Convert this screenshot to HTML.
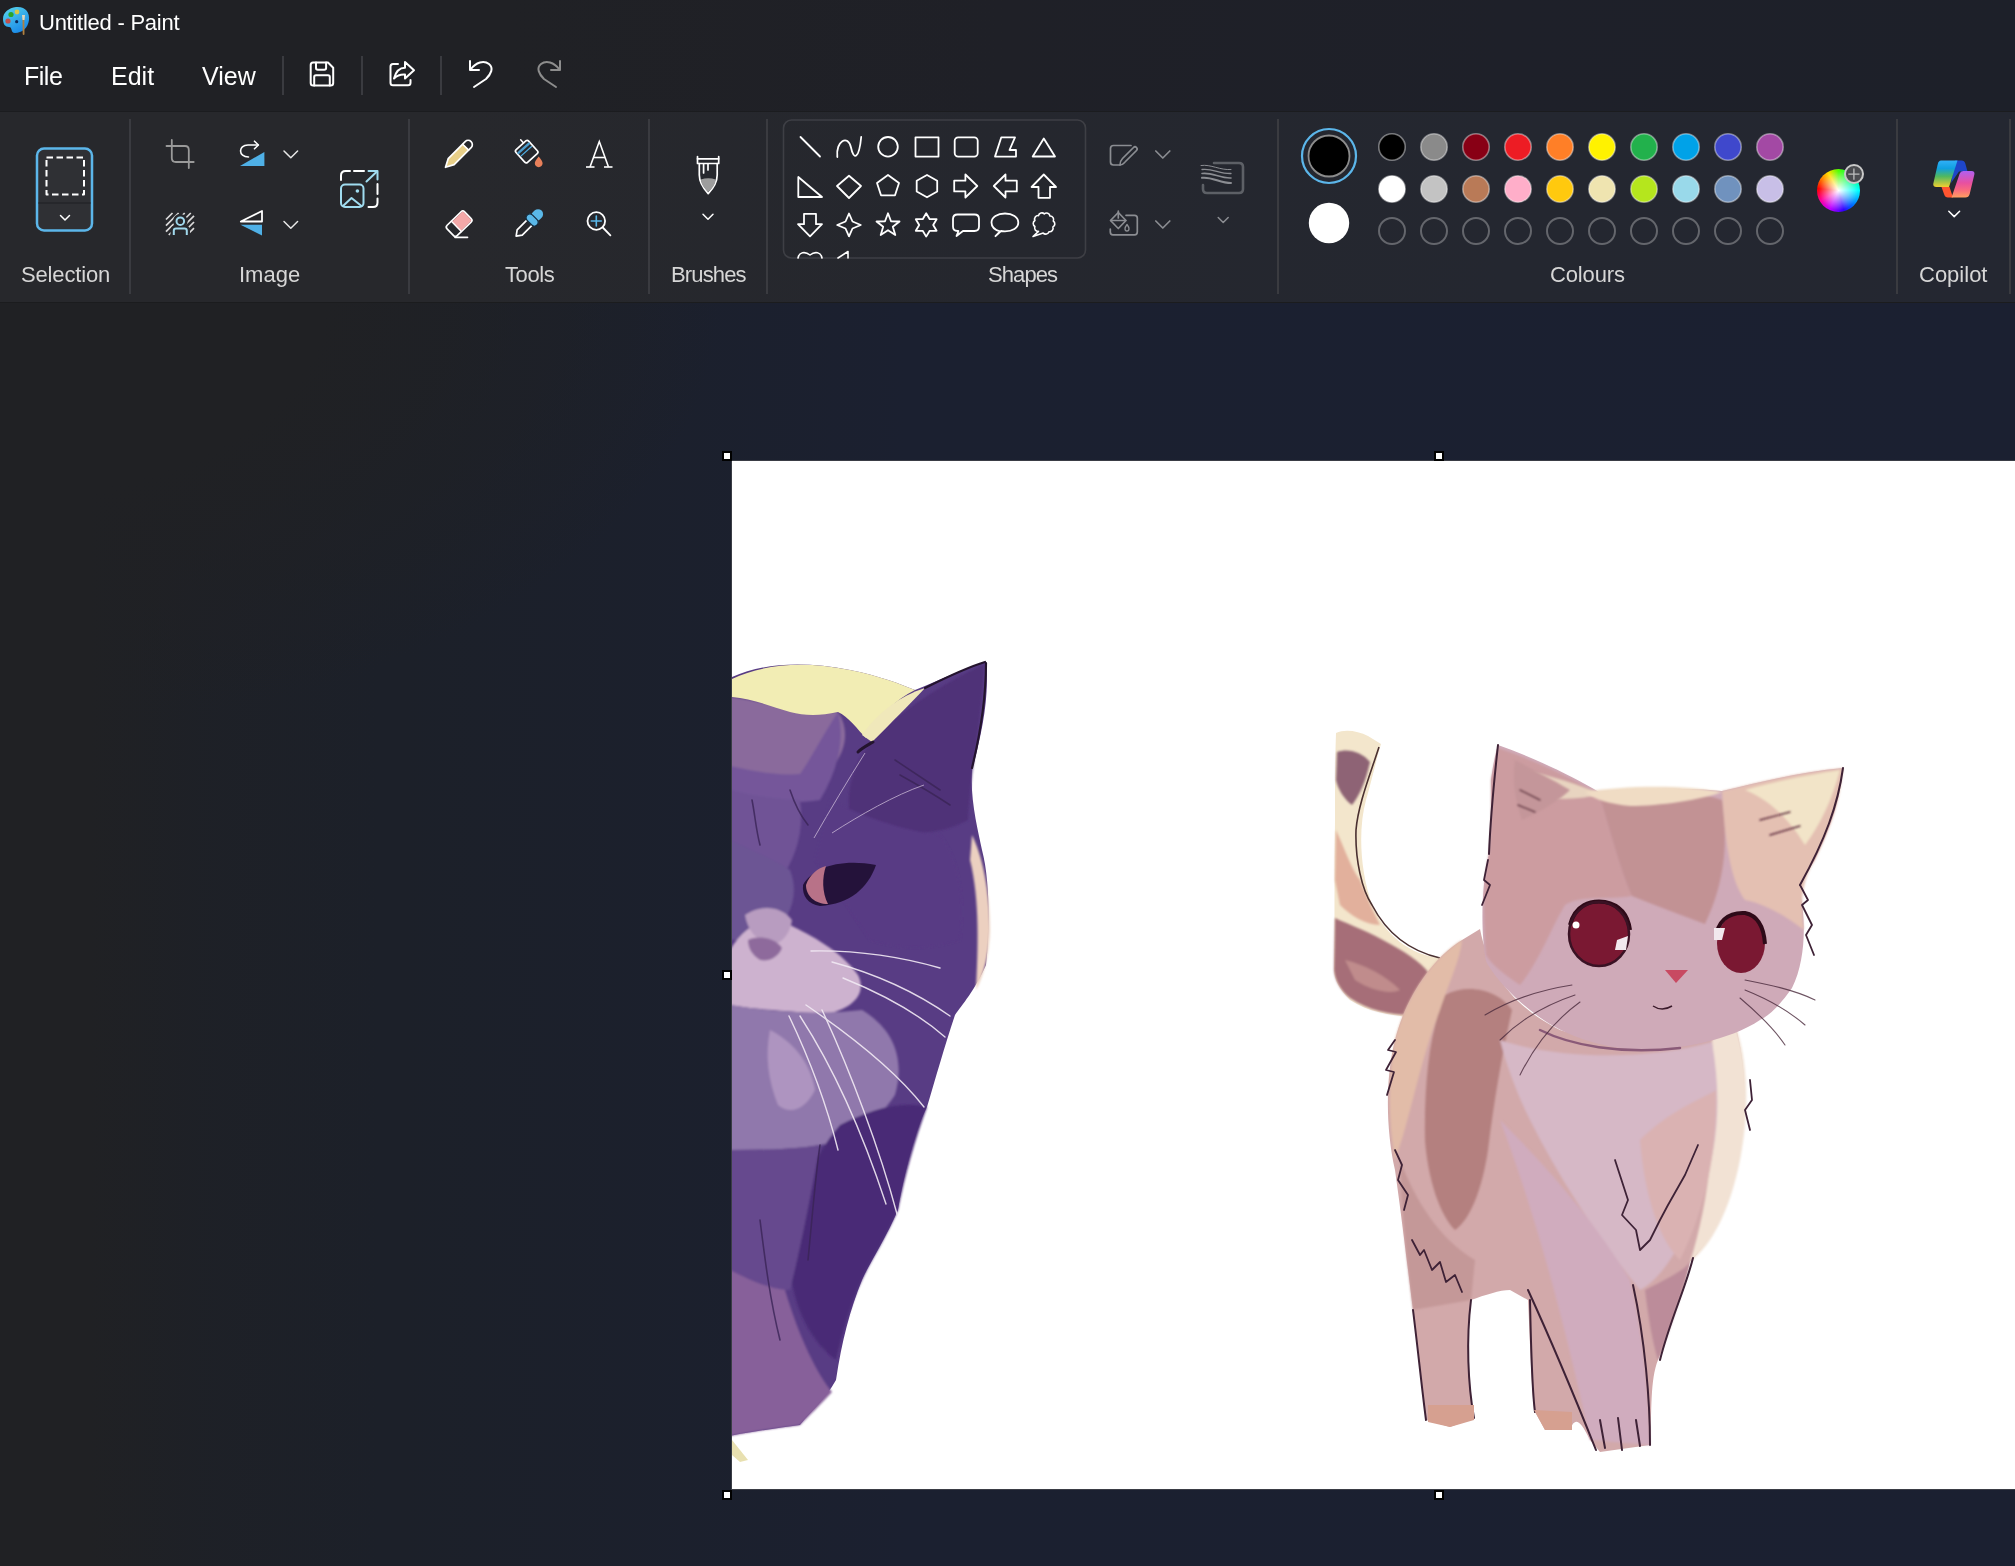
<!DOCTYPE html>
<html><head><meta charset="utf-8">
<style>
*{margin:0;padding:0;box-sizing:border-box}
html,body{width:2015px;height:1566px;overflow:hidden;font-family:"Liberation Sans",sans-serif}
body{position:relative;background:#202124}
.abs{position:absolute}
#top{left:0;top:0;width:2015px;height:111px;background:linear-gradient(90deg,#202125 0%,#202125 25%,#1f2027 50%,#1e2029 75%,#1d2029 100%)}
#ribbon{left:0;top:112px;width:2015px;height:190px;background:linear-gradient(90deg,#27282c 0%,#27282c 22%,#25272e 50%,#242730 75%,#242731 100%)}
#work{left:0;top:303px;width:2015px;height:1263px;background:radial-gradient(ellipse 720px 430px at 0 0,rgba(32,33,36,1) 0%,rgba(32,33,36,1) 45%,rgba(32,33,36,0) 100%),linear-gradient(90deg,rgba(32,33,36,1) 0px,rgba(32,33,36,1) 90px,rgba(32,33,36,0.45) 200px,rgba(32,33,36,0) 380px),linear-gradient(90deg,#1c2029 0%,#1c2029 20%,#1b2030 45%,#1b2031 100%)}
.t{position:absolute;white-space:nowrap;color:#fff;will-change:transform}
.lbl{position:absolute;top:262.3px;font-size:22px;color:#d6d6d6;white-space:nowrap;will-change:transform}
.sep{position:absolute;width:2px;background:#3a3b40}
.tsep{position:absolute;width:2px;top:56px;height:39px;background:#3a3b40}
#canvas{left:732px;top:461px;width:1414px;height:1028px;background:#fff;overflow:hidden;box-shadow:0 0 0 1px #3a3d45}
.h{position:absolute;width:10px;height:10px;background:#fff;border:2px solid #000}
svg{position:absolute;left:0;top:0}
</style></head><body>
<div id="top" class="abs"></div>
<div id="ribbon" class="abs"></div>
<div class="abs" style="left:0;top:111px;width:2015px;height:1px;background:#1b1c1f"></div>
<div class="abs" style="left:0;top:302px;width:2015px;height:1px;background:#1b1c1e"></div>
<div id="work" class="abs"></div>

<div class="t" style="left:39px;top:10px;font-size:22px;letter-spacing:-0.25px">Untitled - Paint</div>
<div class="t" style="left:24px;top:62px;font-size:25px;letter-spacing:-0.5px">File</div>
<div class="t" style="left:111px;top:62px;font-size:25px">Edit</div>
<div class="t" style="left:202px;top:62px;font-size:25px">View</div>
<div class="tsep" style="left:282px"></div>
<div class="tsep" style="left:361px"></div>
<div class="tsep" style="left:440px"></div>

<div class="sep" style="left:129px;top:119px;height:175px"></div>
<div class="sep" style="left:408px;top:119px;height:175px"></div>
<div class="sep" style="left:648px;top:119px;height:175px"></div>
<div class="sep" style="left:766px;top:119px;height:175px"></div>
<div class="sep" style="left:1277px;top:119px;height:175px"></div>
<div class="sep" style="left:1896px;top:119px;height:175px"></div>
<div class="sep" style="left:2009px;top:119px;height:175px"></div>

<div class="lbl" style="left:21px;letter-spacing:-0.15px">Selection</div>
<div class="lbl" style="left:239px">Image</div>
<div class="lbl" style="left:505px;letter-spacing:-0.4px">Tools</div>
<div class="lbl" style="left:671px;letter-spacing:-0.85px">Brushes</div>
<div class="lbl" style="left:988px;letter-spacing:-0.9px">Shapes</div>
<div class="lbl" style="left:1550px;letter-spacing:-0.15px">Colours</div>
<div class="lbl" style="left:1919px">Copilot</div>

<!-- ICONS -->
<svg width="2015" height="310" viewBox="0 0 2015 310" fill="none" stroke-linecap="round" stroke-linejoin="round">
<!-- app icon -->
<g>
<defs><linearGradient id="appg" x1="0" y1="0" x2="0.6" y2="1"><stop offset="0" stop-color="#5ad8ee"/><stop offset="0.5" stop-color="#3ab0ea"/><stop offset="1" stop-color="#1a8ae8"/></linearGradient></defs>
<path d="M16,7 C25,6 30,12 29,20 C28,28 22,33 15,33 C10,33 13,27 9,27 C5,27 3,24 3,19 C3,12 9,8 16,7Z" fill="url(#appg)"/>
<circle cx="8" cy="21" r="2.6" fill="#c0504d"/>
<circle cx="11" cy="14.5" r="2.6" fill="#2aa52a"/>
<circle cx="17" cy="12" r="2.4" fill="#d8c84a"/>
<circle cx="16.7" cy="21.7" r="1.6" fill="#0a2a5a"/>
<path d="M23.4,18 L23.6,34" stroke="#b08040" stroke-width="1.8"/>
<path d="M22,15 L25,15 L24.5,20 L22.5,20Z" fill="#e0d8c0"/>
</g>
<!-- save -->
<g stroke="#fff" stroke-width="2">
<path d="M313,62.5 H328 L333.2,67.7 V83 Q333.2,85.5 330.7,85.5 H313.2 Q310.7,85.5 310.7,83 V65 Q310.7,62.5 313,62.5Z"/>
<path d="M316,62.5 V68 Q316,69.8 317.8,69.8 H324.3 Q326.1,69.8 326.1,68 V62.5"/>
<path d="M314.2,85.5 V77 Q314.2,75.2 316,75.2 H328 Q329.8,75.2 329.8,77 V85.5"/>
</g>
<!-- share -->
<g stroke="#fff" stroke-width="2">
<path d="M398,64 H393 Q390.5,64 390.5,66.5 V82.8 Q390.5,85.3 393,85.3 H408 Q410.5,85.3 410.5,82.8 V80"/>
<path d="M394,78.5 C396,71 400,67.8 405,67.8 V62 L414,70.3 L405,78.5 V74.5 C400.5,74.2 397,75.5 394,78.5Z"/>
</g>
<!-- undo -->
<g stroke="#fff" stroke-width="2">
<path d="M470,61 V70 H479"/>
<path d="M470.5,69.5 C476,62 484,60 489,64 C494,68 491,74 486,79 L474,87"/>
</g>
<!-- redo -->
<g stroke="#8d8d8d" stroke-width="2">
<path d="M560,61 V70 H551"/>
<path d="M559.5,69.5 C554,62 546,60 541,64 C536,68 539,74 544,79 L556,87"/>
</g>

<!-- selection button -->
<rect x="37" y="148.5" width="55" height="82" rx="7" fill="#2f3034" stroke="#5cb6ea" stroke-width="2.5"/>
<line x1="39" y1="203" x2="90" y2="203" stroke="#242529" stroke-width="1.5"/>
<rect x="46.5" y="157.5" width="37.5" height="37" stroke="#fff" stroke-width="2" stroke-dasharray="6.5 3.5" stroke-linecap="butt"/>
<path d="M60.5,215.5 L65,220 L69.5,215.5" stroke="#fff" stroke-width="1.5"/>

<!-- crop -->
<g stroke="#9a9a9a" stroke-width="1.8">
<path d="M166.5,146 H185 Q188.8,146 188.8,150 V168"/>
<path d="M171.8,140 V158 Q171.8,162 175.8,162 H193.7"/>
</g>
<!-- rotate -->
<path d="M240,166 L264.4,152 V166Z" fill="#4fb0e6"/>
<g stroke="#fff" stroke-width="1.6">
<path d="M248.5,157 C238,157 238,145 248,145 H258"/>
<path d="M254.5,141.2 L258.4,145 L254.5,148.8"/>
</g>
<path d="M284,151 L290.8,157.8 L297.6,151" stroke="#e8e8e8" stroke-width="1.5"/>
<!-- remove bg -->
<defs><mask id="rbm" maskUnits="userSpaceOnUse" x="160" y="200" width="40" height="40">
<rect x="160" y="200" width="40" height="40" fill="#fff"/>
<circle cx="180.3" cy="221.2" r="7.3" fill="#000"/>
<path d="M170.5,238 V230.5 Q170.5,225.5 175.5,225.5 H185 Q190,225.5 190,230.5 V238Z" fill="#000"/>
</mask></defs>
<g stroke="#dcdcdc" stroke-width="1.7" stroke-linecap="butt" mask="url(#rbm)">
<path d="M166.0,219.5 L172.5,213.0"/>
<path d="M166.0,225.6 L178.6,213.0"/>
<path d="M166.0,231.7 L184.7,213.0"/>
<path d="M168.8,235.0 L190.8,213.0"/>
<path d="M174.9,235.0 L194.0,215.9"/>
<path d="M181.0,235.0 L194.0,222.0"/>
<path d="M187.1,235.0 L194.0,228.1"/>
</g>
<g stroke="#a0d8ec" stroke-width="2">
<circle cx="180.3" cy="221.2" r="3.8"/>
<path d="M173.8,235 V230.8 Q173.8,228.6 176,228.6 H184.6 Q186.8,228.6 186.8,230.8 V235" stroke-linecap="butt"/>
</g>
<!-- flip -->
<path d="M240.8,221.5 L262,211 V221.5Z" stroke="#fff" stroke-width="1.8"/>
<path d="M240.5,224.8 H262 V235.5Z" fill="#4fb0e6"/>
<path d="M284,221.5 L290.8,228.3 L297.6,221.5" stroke="#e8e8e8" stroke-width="1.5"/>
<!-- resize -->
<g stroke="#fff" stroke-width="2">
<path d="M341,180 V175.5 Q341,171 345.5,171 H350"/>
<path d="M354,171 H364"/>
<path d="M377.5,184 V194"/>
<path d="M377.5,198.5 V202.5 Q377.5,207 373,207 H368.5"/>
</g>
<g stroke="#a0dcf0" stroke-width="2">
<path d="M368.5,171 H377.5 V179.5"/>
<path d="M366.5,181.5 L377,171.5"/>
<rect x="341" y="184.5" width="22.5" height="22.5" rx="4"/>
<path d="M343,206 L351.5,198 L361.5,206"/>
</g>
<circle cx="357.4" cy="191" r="1.8" fill="#a0dcf0"/>

<!-- pencil -->
<g transform="translate(445.5,167.3) rotate(-45)">
<path d="M0,0 L8,-4.2 H29 V4.2 H8Z" fill="#e8cf88"/>
<path d="M0,0 L8,-4.2 H32 A4.2,4.2 0 0 1 32,4.2 H8Z" stroke="#fff" stroke-width="1.7"/>
<path d="M28.5,-4.2 V4.2" stroke="#fff" stroke-width="1.5"/>
</g>
<!-- fill bucket -->
<g transform="translate(526.7,151.6) rotate(-42)">
<rect x="-8.5" y="-8.5" width="17" height="17" rx="2" stroke="#fff" stroke-width="1.7"/>
<path d="M-7,-4.5 H7" stroke="#4a9ccc" stroke-width="2.4"/>
<path d="M-7,-0.5 H7" stroke="#4fb0e6" stroke-width="1.2"/>
<path d="M3.4,-8.5 V-12.8" stroke="#fff" stroke-width="1.5"/>
</g>
<path d="M538.7,156.5 C536,160 534.8,161.5 534.8,163.3 C534.8,165.5 536.5,167.2 538.7,167.2 C540.9,167.2 542.6,165.5 542.6,163.3 C542.6,161.5 541.4,160 538.7,156.5Z" fill="#e8805a"/>
<!-- text A -->
<g stroke="#fff" stroke-width="1.6" stroke-linecap="butt" stroke-linejoin="miter">
<path d="M590,167 L599.3,141.5 L608.5,167"/>
<path d="M593.5,157.5 H605"/>
<path d="M586,167 H594.5"/><path d="M604,167 H612.5"/>
</g>
<!-- eraser -->
<g transform="translate(459.1,223.7) rotate(-44)">
<rect x="-12.2" y="-7.2" width="24.4" height="14.4" rx="2.5" stroke="#fff" stroke-width="1.7"/>
<path d="M-3.8,-6.4 H10.2 Q11.4,-6.4 11.4,-5.2 V5.2 Q11.4,6.4 10.2,6.4 H-3.8Z" fill="#f4a8a8"/>
<path d="M-3.8,-7.2 V7.2" stroke="#fff" stroke-width="1.4"/>
</g>
<path d="M455,237.3 H467.5" stroke="#fff" stroke-width="1.7"/>
<!-- color picker -->
<g transform="translate(515.8,236.4) rotate(-45)">
<path d="M0.5,0 L5.5,-3.6 H20 V3.6 H5.5Z" stroke="#fff" stroke-width="1.7"/>
<rect x="24" y="-5" width="12.5" height="10" rx="5" fill="#5ab8e8"/>
<rect x="19.3" y="-7" width="7.6" height="14" rx="3.8" fill="#5ab8e8" stroke="#14283a" stroke-width="1.2"/>
</g>
<!-- magnifier -->
<g stroke="#fff" stroke-width="1.8">
<circle cx="596.3" cy="221" r="8.8"/>
<path d="M602.8,227.5 L610.4,235.3"/>
</g>
<path d="M596.3,216 V226 M591.3,221 H601.3" stroke="#5bb8ea" stroke-width="1.6"/>

<!-- brush -->
<g stroke="#fff" stroke-width="1.7">
<path d="M697.5,156.5 V163.5 H718.7 V156.5"/>
<path d="M697.5,158.8 H718.7"/>
<path d="M699.3,163.5 V175 C699.3,182 703,188 708.2,193.6 C713.5,188 717.2,182 717.2,175 V163.5"/>
<path d="M703.6,164 V173 M708,164 V170"/>
</g>
<path d="M700.8,179.5 Q708.2,176.8 715.8,179.5 C715.4,184 712.8,188 708.2,192 C703.8,188 701.1,184 700.8,179.5Z" fill="#9d9d9d"/>
<path d="M703,214.3 L708,219.3 L713,214.3" stroke="#fff" stroke-width="1.5"/>

<!-- shapes box -->
<rect x="783.5" y="120" width="302" height="138" rx="8" stroke="#3e3f45" stroke-width="1.6"/>
<g stroke="#fff" stroke-width="1.8">
<path d="M800.5,137 L820,156.5"/>
<path d="M837.3,157 C835.5,141 848,134 851,147.5 C853.5,160 859,160 861.2,137"/>
<circle cx="888" cy="146.8" r="9.8"/>
<rect x="915.5" y="137.3" width="23" height="19.3"/>
<rect x="954.7" y="137.3" width="23" height="19.3" rx="3.5"/>
<path d="M1001.3,137.3 H1015 L1009.5,150 H1016 V156.6 H995Z"/>
<path d="M1043.8,138.5 L1055,156.5 H1032.7Z"/>
<path d="M798.3,177 V197 H822Z"/>
<path d="M849,175.8 L861,186 L849,198 L837,186Z"/>
<path d="M888,175 L899,183 L895,195.3 H881 L877,183Z"/>
<path d="M927,175 L937.2,180.7 V191.5 L927,197.3 L916.7,191.5 V180.7Z"/>
<path d="M954.2,180.7 H965.4 V174.5 L977.3,186 L965.4,197.5 V191.4 H954.2Z"/>
<path d="M1016.8,180.7 H1005.5 V174.5 L993.8,186 L1005.5,197.5 V191.4 H1016.8Z"/>
<path d="M1043.8,174.5 L1056,187 H1050 V197.8 H1038.5 V187 H1031.6Z"/>
<path d="M804,213.8 H816 V224.2 H822 L810,236.3 L798,224.2 H804Z"/>
<path d="M849,213.5 L852.5,221.5 L860.8,225 L852.5,228.5 L849,236.3 L845.5,228.5 L837.2,225 L845.5,221.5Z"/>
<path d="M888,213.3 L891,221.3 L899.5,221.5 L892.8,226.8 L895.3,235 L888,230.2 L880.7,235 L883.2,226.8 L876.5,221.5 L885,221.3Z"/>
<path d="M926.2,213.3 L929.7,219.2 L936.6,219.2 L933.2,225 L936.6,230.8 L929.7,230.8 L926.2,236.6 L922.7,230.8 L915.8,230.8 L919.2,225 L915.8,219.2 L922.7,219.2Z"/>
<path d="M957.5,214.5 H974.5 Q979,214.5 979,219 V226.5 Q979,231 974.5,231 H963 L956.5,236 L958.5,231 H957.5 Q953,231 953,226.5 V219 Q953,214.5 957.5,214.5Z"/>
<path d="M1000,231.3 C993,229.5 991.5,225.5 991.5,222.5 C991.5,217 997.5,213.5 1005,213.5 C1012.5,213.5 1018.3,217 1018.3,222.5 C1018.3,228 1012.5,231.3 1005,231.3 C1003.5,231.3 1002,231.2 1001,231 L995.5,236.2Z"/>
<path d="M1038.5,231.4 A3.5,3.5 0 0 1 1034.9,226.5 A3.5,3.5 0 0 1 1034.9,220.5 A3.5,3.5 0 0 1 1038.5,215.6 A3.5,3.5 0 0 1 1044.3,213.9 A3.5,3.5 0 0 1 1050.0,216.0 A3.5,3.5 0 0 1 1053.3,221.0 A3.5,3.5 0 0 1 1052.9,227.0 A3.5,3.5 0 0 1 1049.0,231.7 A3.5,3.5 0 0 1 1043.2,233.1 L1033,236.5 Z" stroke-width="1.6"/>
<path d="M798,258 C799,252 805,251 810,255 C815,251 821,252 822,258" stroke-width="1.6"/>
<path d="M838,258 L848,251.5 V258" stroke-width="1.6"/>
</g>
<!-- outline / fill -->
<g stroke="#8b8d92" stroke-width="1.7">
<path d="M1131,145.5 H1113.5 Q1110.5,145.5 1110.5,148.5 V162 Q1110.5,165 1113.5,165 H1120"/>
<path d="M1120,165 C1120,161 1121,160 1122.5,158.5 L1133.5,147.5 Q1135,146 1136.5,147.5 Q1138,149 1136.5,150.5 L1125.5,161.5 C1124,163 1123,165 1120,165Z"/>
<path d="M1155.8,151 L1162.8,158 L1169.8,151"/>
<path d="M1126,215.3 H1134.5 Q1137.3,215.3 1137.3,218 V232 Q1137.3,234.8 1134.5,234.8 H1113 Q1110.3,234.8 1110.3,232 V229"/>
<path d="M1118.3,212.5 L1126,220.5 L1118.3,228.5 L1110.5,220.5Z"/>
<path d="M1110.8,220.5 H1125.5"/>
<path d="M1118.3,211 V218"/>
<path d="M1127,224.5 C1125.5,226.5 1125,227.5 1125,228.7 C1125,230 1126,231 1127,231 C1128,231 1129,230 1129,228.7 C1129,227.5 1128.5,226.5 1127,224.5Z" stroke-width="1.3"/>
<path d="M1155.8,221 L1162.8,228 L1169.8,221"/>
</g>
<g>
<path d="M1214,163 H1239 Q1243,163 1243,167 V189 Q1243,193 1239,193 H1207 Q1203,193 1203,189 V185" stroke="#5d6066" stroke-width="2.6"/>
<g stroke="#8b8d92">
<path d="M1201,165.5 C1211,164 1220,170.5 1231,169.5" stroke-width="1"/>
<path d="M1202,169.5 C1212,168 1220,174 1231,173.5" stroke-width="1.3"/>
<path d="M1202,173.5 C1212,172 1220,178.5 1231,178" stroke-width="1.6"/>
<path d="M1202,177.8 C1212,176.5 1220,183 1231,183" stroke-width="2"/>
</g>
<path d="M1218.2,217.5 L1223.2,222.5 L1228.2,217.5" stroke="#8b8d92" stroke-width="1.5"/>
</g>

<!-- colours -->
<circle cx="1329" cy="156" r="27" stroke="#5cb6ea" stroke-width="2.2"/>
<circle cx="1329" cy="156" r="20.5" fill="#000" stroke="#8c8c8c" stroke-width="1.8"/>
<circle cx="1329" cy="223" r="20.2" fill="#fff"/>
<g stroke="rgba(255,255,255,0.42)" stroke-width="1.6">
<circle cx="1392" cy="147" r="13.2" fill="#000000"/>
<circle cx="1434" cy="147" r="13.2" fill="#8a8a8a"/>
<circle cx="1476" cy="147" r="13.2" fill="#880015"/>
<circle cx="1518" cy="147" r="13.2" fill="#ed1c24"/>
<circle cx="1560" cy="147" r="13.2" fill="#ff7f27"/>
<circle cx="1602" cy="147" r="13.2" fill="#fff200"/>
<circle cx="1644" cy="147" r="13.2" fill="#22b14c"/>
<circle cx="1686" cy="147" r="13.2" fill="#00a2e8"/>
<circle cx="1728" cy="147" r="13.2" fill="#3f48cc"/>
<circle cx="1770" cy="147" r="13.2" fill="#a349a4"/>
<circle cx="1392" cy="189" r="13.2" fill="#ffffff"/>
<circle cx="1434" cy="189" r="13.2" fill="#c3c3c3"/>
<circle cx="1476" cy="189" r="13.2" fill="#b97a57"/>
<circle cx="1518" cy="189" r="13.2" fill="#ffaec9"/>
<circle cx="1560" cy="189" r="13.2" fill="#ffc90e"/>
<circle cx="1602" cy="189" r="13.2" fill="#efe4b0"/>
<circle cx="1644" cy="189" r="13.2" fill="#b5e61d"/>
<circle cx="1686" cy="189" r="13.2" fill="#99d9ea"/>
<circle cx="1728" cy="189" r="13.2" fill="#7092be"/>
<circle cx="1770" cy="189" r="13.2" fill="#c8bfe7"/>
</g>
<g stroke="#64666c" stroke-width="2">
<circle cx="1392" cy="231" r="13"/><circle cx="1434" cy="231" r="13"/><circle cx="1476" cy="231" r="13"/>
<circle cx="1518" cy="231" r="13"/><circle cx="1560" cy="231" r="13"/><circle cx="1602" cy="231" r="13"/>
<circle cx="1644" cy="231" r="13"/><circle cx="1686" cy="231" r="13"/><circle cx="1728" cy="231" r="13"/>
<circle cx="1770" cy="231" r="13"/>
</g>
<path d="M1948.8,211.2 L1954.2,216.6 L1959.6,211.2" stroke="#fff" stroke-width="1.5"/>
</svg>

<!-- color wheel -->
<div class="abs" style="left:1816.5px;top:168.7px;width:43px;height:43px;border-radius:50%;background:radial-gradient(circle at 50% 50%,#fff 0%,rgba(255,255,255,0.6) 25%,rgba(255,255,255,0) 65%),conic-gradient(#50ff00 0deg,#00ff80 50deg,#00ffff 90deg,#0060ff 140deg,#3000ff 165deg,#c000ff 205deg,#ff00a0 240deg,#ff0000 275deg,#ff8000 305deg,#ffe000 330deg,#50ff00 360deg)"></div>
<div class="abs" style="left:1843.8px;top:164px;width:20.2px;height:20.2px;border-radius:50%;background:#4b4c50;border:2px solid #c9c9c9"></div>
<svg width="2015" height="310" viewBox="0 0 2015 310" fill="none">
<path d="M1853.9,168.5 V179.7 M1848.3,174.1 H1859.5" stroke="#bdbdbd" stroke-width="1.3"/>
<!-- copilot -->
<defs>
<linearGradient id="cpL" x1="0" y1="0" x2="0" y2="1"><stop offset="0" stop-color="#30b0f8"/><stop offset="0.3" stop-color="#10a0e0"/><stop offset="0.6" stop-color="#50b860"/><stop offset="1" stop-color="#f0d030"/></linearGradient>
<linearGradient id="cpR" x1="0" y1="0" x2="0" y2="1"><stop offset="0" stop-color="#b060f0"/><stop offset="0.45" stop-color="#e850a0"/><stop offset="0.7" stop-color="#f86880"/><stop offset="1" stop-color="#ffa060"/></linearGradient>
</defs>
<path d="M1955,160.5 H1961.5 Q1964.5,160.5 1965.3,163.5 L1967.5,171.5 H1959 L1951,183Z" fill="#1e46c8"/>
<path d="M1941,160.5 H1957.5 L1949,187 H1936.3 Q1932.6,187 1933.4,183.3 L1937.8,164 Q1938.6,160.5 1941,160.5Z" fill="url(#cpL)"/>
<path d="M1941.5,187 H1949.5 L1953,197.5 H1948 Q1945,197.5 1944.2,194.5Z" fill="#ff5530"/>
<path d="M1963.2,171 H1971.5 Q1975.2,171 1974.3,174.8 L1969.7,194 Q1968.8,197.6 1965.3,197.6 H1951.5 L1959.6,173.8 Q1960.5,171 1963.2,171Z" fill="url(#cpR)"/>
</svg>

<div id="canvas" class="abs"></div>

<svg id="cats" width="2015" height="1566" viewBox="0 0 2015 1566" style="position:absolute;left:0;top:0">
<defs>
<clipPath id="cv"><rect x="732" y="461" width="1283" height="1028"/></clipPath>
<filter id="soft" x="-5%" y="-5%" width="110%" height="110%"><feGaussianBlur stdDeviation="1.2"/></filter>
<filter id="soft3" x="-10%" y="-10%" width="120%" height="120%"><feGaussianBlur stdDeviation="4"/></filter>
</defs>
<g clip-path="url(#cv)">
<!-- LEFT CAT -->
<path d="M730,678 C760,664 800,660 850,670 C880,676 900,684 915,690 C940,680 965,668 986,662 C990,700 980,740 972,770 C970,800 978,830 982,850 C990,880 990,930 986,965 C975,990 962,1005 955,1015 C945,1045 935,1080 927,1107 C915,1130 905,1170 898,1210 C885,1240 870,1262 862,1280 C850,1310 842,1340 836,1380 C825,1400 812,1410 800,1425 C780,1428 760,1430 730,1436 Z" fill="#583c84"/>
<g filter="url(#soft)">
<!-- forehead mauve -->
<path d="M730,697 C760,700 790,712 838,712 C850,730 846,750 832,768 C812,778 790,780 770,776 C755,772 740,768 730,768Z" fill="#8a6a9c"/>
<path d="M730,766 C750,770 775,776 800,774 C810,760 820,740 838,712 C845,740 838,770 820,800 C790,805 760,800 730,800Z" fill="#74569a"/>
<path d="M730,790 C750,795 775,800 800,800 C805,830 795,860 780,880 C760,880 745,870 730,865Z" fill="#705296"/>

<!-- left bluish side -->
<path d="M730,840 C750,850 775,860 790,870 C800,895 790,920 770,935 C755,940 740,940 730,940Z" fill="#6c5494"/>
<!-- dark ear/forehead right -->
<path d="M873,740 C900,710 950,680 984,664 C982,720 970,770 968,820 C930,840 890,835 850,815 C845,790 855,760 873,740Z" fill="#4f3078"/>
<path d="M830,800 C860,815 900,830 940,835 C960,860 965,900 960,940 C930,950 900,950 870,940 C850,910 830,880 815,860Z" fill="#583a84"/>
<!-- right glow edge -->
<path d="M972,835 C982,855 990,890 990,930 C989,955 984,975 976,990 C978,950 980,900 970,860Z" fill="#ecd0c0"/>
<!-- muzzle lighter -->
<path d="M730,950 C745,925 765,915 790,925 C810,935 840,950 858,975 C868,995 850,1010 825,1014 C795,1012 770,1010 750,1008 L730,1005Z" fill="#cdb2cf"/>
<path d="M745,915 C760,905 780,905 792,920 C790,935 780,945 770,945 C755,940 748,930 745,915Z" fill="#b89cc0"/>
<path d="M748,940 C760,935 775,938 782,948 C778,958 768,962 760,960 C752,955 748,948 748,940Z" fill="#8e6a9c"/>
<!-- chest -->
<path d="M730,1005 C770,1012 820,1015 862,1010 C895,1030 905,1060 895,1095 C875,1125 850,1140 820,1145 C790,1150 760,1150 730,1150Z" fill="#9078ac"/>
<path d="M770,1030 C790,1040 810,1060 815,1090 C805,1110 790,1115 778,1105 C768,1080 765,1055 770,1030Z" fill="#ae94c0"/>
<!-- dark purple lower body -->
<path d="M840,1125 C870,1110 900,1100 927,1107 C915,1140 905,1175 898,1210 C885,1240 870,1262 862,1280 C850,1305 842,1335 836,1360 C810,1340 795,1310 790,1270 C790,1210 810,1160 840,1125Z" fill="#482a76"/>
<!-- lower left mauve -->
<path d="M730,1180 C750,1200 770,1240 785,1290 C800,1340 818,1375 832,1392 C820,1405 810,1415 800,1425 C780,1428 760,1430 730,1436Z" fill="#87609a"/>
<path d="M730,1150 C760,1150 790,1150 820,1145 C810,1200 800,1250 790,1290 C770,1290 750,1280 730,1270Z" fill="#664a8e"/>
</g>
<!-- yellow top fur -->
<path d="M730,680 C760,665 800,660 850,670 C880,676 900,684 915,690 C895,700 880,715 866,738 C858,730 848,716 838,712 C820,716 805,716 790,712 C770,706 750,698 730,697Z" fill="#f2edb4"/>
<path d="M862,735 C878,712 900,696 925,688 C908,706 892,722 872,742Z" fill="#f0e8ba"/>
<g fill="none" stroke="#24142e" stroke-width="2.2" stroke-linecap="round">
<path d="M986,663 C986,700 980,735 972,768"/>
<path d="M925,688 C945,678 965,668 985,662"/>
<path d="M873,742 C868,745 862,748 858,752" stroke-width="3"/>
</g>
<g fill="none" stroke="#3a2456" stroke-width="1.6" stroke-linecap="round" opacity="0.8">
<path d="M790,790 C795,805 800,815 808,825"/>
<path d="M752,800 C755,815 756,830 760,845"/>
<path d="M895,760 C910,770 925,780 940,790"/>
<path d="M900,775 C918,785 935,795 950,805"/>
<path d="M820,1145 C815,1180 812,1220 808,1260"/>
<path d="M760,1220 C765,1260 770,1300 780,1340"/>
</g>
<!-- eye -->
<path d="M803,885 C812,868 840,858 876,865 C868,888 850,904 820,906 C808,904 802,896 803,885Z" fill="#24123a"/>
<path d="M806,885 C810,874 818,868 826,866 C822,878 822,892 828,904 C815,904 806,896 806,885Z" fill="#b87288"/>
<!-- whiskers -->
<g stroke="#f2eaf4" stroke-width="1.4" fill="none" opacity="0.9" stroke-linecap="round">
<path d="M811,951 C860,950 905,958 940,968"/>
<path d="M832,962 C880,975 920,995 950,1016"/>
<path d="M843,978 C885,995 920,1015 945,1037"/>
<path d="M806,1005 C850,1035 895,1070 924,1107"/>
<path d="M800,1016 C835,1070 865,1140 886,1204"/>
<path d="M789,1016 C810,1060 828,1110 838,1150"/>
<path d="M822,1010 C850,1070 880,1150 897,1214"/>
</g>
<g stroke="#d8c8e0" stroke-width="1" fill="none" opacity="0.7">
<path d="M814,838 C830,810 848,780 865,753"/>
<path d="M832,833 C860,815 895,795 924,785"/>
</g>
<path d="M732,1440 L748,1460 L740,1462 L732,1455Z" fill="#e8e0b0"/>

<!-- RIGHT CAT -->
<!-- tail -->
<path d="M1336,733 C1345,729 1358,731 1368,736 L1381,744 C1376,760 1372,780 1366,800 C1358,830 1360,870 1372,905 C1385,935 1410,955 1440,958 C1435,985 1425,1005 1410,1017 C1390,1015 1368,1012 1350,1000 C1340,990 1334,980 1334,970 C1335,920 1334,870 1335,820 C1335,790 1335,760 1336,733Z" fill="#f3e6cc"/>
<g filter="url(#soft)">
<path d="M1337,752 C1348,748 1362,752 1370,762 C1366,780 1360,795 1352,805 C1345,800 1338,790 1336,780Z" fill="#8e6474"/>
<path d="M1336,830 C1345,850 1352,870 1360,880 C1368,900 1375,915 1380,925 C1365,925 1350,915 1340,905 L1335,880Z" fill="#e2b09c"/>
<path d="M1335,918 C1350,925 1370,932 1392,945 C1410,955 1425,965 1432,978 C1428,995 1420,1008 1410,1015 C1390,1015 1368,1010 1350,998 C1340,990 1335,980 1334,970Z" fill="#a66e78"/>
<path d="M1345,960 C1365,965 1385,975 1400,990 C1390,995 1370,990 1355,980Z" fill="#c08c8c"/>
</g>
<path d="M1379,747 C1370,775 1358,805 1356,830 C1355,860 1362,890 1372,905 C1385,930 1405,950 1440,958" fill="none" stroke="#4a3030" stroke-width="1.6"/>
<!-- body -->
<path d="M1462,940 C1430,960 1405,1000 1395,1040 C1385,1080 1386,1130 1395,1170 C1402,1220 1408,1270 1413,1310 C1418,1350 1422,1390 1426,1420 L1450,1427 L1474,1418 C1468,1385 1466,1340 1471,1300 C1485,1295 1500,1290 1510,1290 L1528,1300 C1530,1340 1531,1380 1534,1410 L1545,1430 L1570,1430 C1574,1420 1578,1415 1590,1440 L1600,1452 L1650,1445 C1652,1410 1650,1380 1658,1360 C1668,1335 1680,1300 1690,1262 C1712,1240 1728,1200 1738,1150 C1748,1100 1745,1060 1735,1024 C1700,1040 1620,1050 1560,1030 C1520,1010 1490,980 1480,929Z" fill="#d2a9aa"/>
<g filter="url(#soft)">
<!-- body left shading -->
<path d="M1445,995 C1470,982 1500,992 1512,1010 C1502,1055 1494,1100 1488,1150 C1482,1190 1470,1220 1455,1230 C1440,1215 1428,1180 1425,1140 C1424,1080 1430,1030 1445,995Z" fill="#b4807f"/>
<path d="M1400,1160 C1415,1200 1440,1240 1475,1260 L1471,1300 L1413,1310 C1408,1270 1402,1220 1400,1160Z" fill="#c49898"/>
<!-- peach left edge -->
<path d="M1462,940 C1430,960 1405,1000 1395,1040 C1388,1080 1388,1120 1395,1160 C1410,1120 1420,1060 1440,1010 C1450,980 1460,960 1462,940Z" fill="#e2bca8"/>
<!-- right glow -->
<path d="M1735,1024 C1748,1060 1750,1110 1740,1160 C1730,1210 1712,1245 1690,1262 C1710,1200 1718,1120 1712,1040Z" fill="#f2e2d4"/>
<!-- chest lavender -->
<path d="M1500,1040 C1560,1060 1650,1060 1712,1042 C1722,1100 1718,1150 1700,1200 C1680,1250 1660,1280 1640,1290 C1600,1240 1560,1180 1530,1120 C1515,1090 1505,1060 1500,1040Z" fill="#d6b8c6"/>
<path d="M1640,1140 C1670,1110 1700,1100 1716,1090 C1718,1150 1705,1210 1680,1260 C1660,1240 1645,1200 1640,1140Z" fill="#dab2b2"/>
<!-- front leg -->
<path d="M1500,1120 C1530,1200 1560,1300 1590,1440 L1650,1445 C1648,1380 1640,1320 1630,1280 C1600,1230 1560,1180 1500,1120Z" fill="#d0acbe"/>
<path d="M1645,1290 C1665,1280 1685,1270 1690,1262 C1680,1300 1668,1335 1658,1360 C1652,1340 1648,1315 1645,1290Z" fill="#bc8c9a"/>
</g>
<!-- head -->
<path d="M1498,745 C1540,760 1575,778 1599,792 C1640,788 1690,788 1722,791 C1760,782 1800,772 1843,768 C1840,800 1832,825 1815,860 C1805,875 1800,885 1800,892 C1806,920 1806,960 1792,988 C1780,1005 1770,1015 1760,1020 C1730,1040 1680,1050 1641,1050 C1600,1048 1560,1035 1530,1010 C1505,990 1490,970 1486,961 C1480,930 1482,880 1489,854 C1492,820 1491,800 1491,780 C1493,765 1495,755 1498,745Z" fill="#cfaab8"/>
<g filter="url(#soft)">
<!-- left head tan -->
<path d="M1498,748 C1540,762 1575,780 1599,794 C1610,830 1620,870 1632,896 C1605,900 1580,895 1565,905 C1550,930 1540,960 1520,985 C1505,975 1492,965 1486,955 C1482,900 1485,870 1489,854 C1492,820 1491,800 1491,780Z" fill="#cc9ca0"/>
<!-- forehead patch -->
<path d="M1599,794 C1640,790 1690,788 1722,800 C1728,840 1726,880 1705,924 C1680,915 1655,905 1632,896 C1620,870 1610,830 1599,794Z" fill="#c29294"/>
<!-- right head peach -->
<path d="M1722,791 C1760,782 1800,772 1843,768 C1840,800 1832,825 1815,860 C1802,880 1800,900 1804,930 C1790,920 1770,905 1745,900 C1730,880 1725,840 1722,791Z" fill="#e4c0b2"/>
<path d="M1745,790 C1780,780 1815,774 1840,770 C1832,800 1820,825 1805,845 C1790,820 1770,800 1745,790Z" fill="#f2e4c8"/>
<path d="M1520,770 C1550,775 1580,785 1600,794 C1580,800 1555,800 1530,795Z" fill="#e8d4c0"/>
</g>
<!-- eyes -->
<ellipse cx="1599" cy="934" rx="30" ry="32" fill="#7a1832"/>
<path d="M1570,925 C1575,905 1590,900 1605,902 C1620,905 1628,915 1630,930" fill="none" stroke="#2e0a18" stroke-width="4"/>
<ellipse cx="1599" cy="934" rx="30" ry="32" fill="none" stroke="#3a1224" stroke-width="2.5"/>
<ellipse cx="1741" cy="943" rx="24" ry="30" fill="#7a1832"/>
<path d="M1716,940 C1716,922 1728,912 1745,913 C1760,916 1764,930 1765,944" fill="none" stroke="#2e0a18" stroke-width="4"/>
<circle cx="1576" cy="925" r="3.5" fill="#fff"/>
<path d="M1617,940 L1628,936 L1626,950 L1615,950Z" fill="#f2e8ee"/>
<path d="M1714,928 L1725,928 L1722,940 L1714,940Z" fill="#f2e8ee"/>
<path d="M1665,970 L1688,970 L1676,983Z" fill="#c84a62"/>
<path d="M1653,1006 Q1662,1012 1672,1006" fill="none" stroke="#3a1a2a" stroke-width="1.5"/>
<!-- outlines -->
<g fill="none" stroke="#3e2236" stroke-width="2" stroke-linecap="round">
<path d="M1498,745 C1493,790 1490,830 1489,854"/>
<path d="M1843,768 C1838,805 1825,840 1800,885"/>
<path d="M1471,1300 C1466,1340 1468,1385 1474,1418"/>
<path d="M1413,1310 C1418,1350 1422,1390 1426,1420"/>
<path d="M1528,1290 C1560,1360 1580,1410 1596,1450"/>
<path d="M1633,1285 C1645,1340 1650,1400 1650,1445"/>
<path d="M1660,1360 C1670,1320 1685,1290 1693,1258"/>
<path d="M1530,1300 C1531,1350 1532,1390 1535,1412"/>
<path d="M1600,1420 L1605,1448 M1618,1418 L1622,1450 M1636,1420 L1640,1446"/>
<path d="M1540,1030 C1570,1045 1620,1055 1680,1048" stroke="#8a5a78" stroke-width="2.5"/>
</g>
<g filter="url(#soft)">
<path d="M1585,792 C1620,786 1680,784 1722,792 C1700,800 1660,806 1630,806 C1610,804 1595,800 1585,792Z" fill="#f0dcc4"/>
<path d="M1515,760 C1530,768 1550,778 1570,790 C1560,800 1540,812 1522,820 C1515,800 1512,780 1515,760Z" fill="#c4969a"/>
<path d="M1520,790 L1540,800 M1518,805 L1535,812 M1760,820 L1790,812 M1770,835 L1800,826" fill="none" stroke="#5a2a3a" stroke-width="1.4" stroke-linecap="round"/>
</g>
<g fill="none" stroke="#4a2a3c" stroke-width="1.1" stroke-linecap="round" opacity="0.8">
<path d="M1572,985 C1540,990 1510,1000 1485,1015"/>
<path d="M1575,995 C1545,1005 1520,1020 1500,1040"/>
<path d="M1580,1002 C1555,1020 1535,1045 1520,1075"/>
<path d="M1745,980 C1770,985 1795,990 1815,1000"/>
<path d="M1745,990 C1770,1000 1790,1012 1805,1025"/>
<path d="M1740,998 C1760,1015 1775,1030 1785,1045"/>
</g>
<g fill="none" stroke="#3e2236" stroke-width="1.8" stroke-linecap="round" stroke-linejoin="round">
<path d="M1395,1040 L1388,1050 L1396,1052 L1386,1070 L1394,1072 L1387,1095"/>
<path d="M1395,1150 L1402,1165 L1398,1180 L1408,1195 L1404,1210"/>
<path d="M1412,1240 L1420,1255 L1424,1250 L1432,1270 L1440,1262 L1446,1282 L1455,1275 L1462,1292"/>
<path d="M1615,1160 L1628,1200 L1622,1215 L1636,1230 L1640,1250 L1650,1240 L1660,1220 L1668,1205 L1685,1175 L1698,1145"/>
<path d="M1800,885 L1808,900 L1802,905 L1812,925 L1806,935 L1814,955"/>
<path d="M1488,860 L1484,880 L1490,885 L1482,905"/>
<path d="M1750,1080 L1752,1100 L1745,1110 L1750,1130"/>
</g>
<path d="M1428,1405 L1474,1405 L1474,1420 L1450,1427 L1428,1422Z" fill="#d6a090"/>
<path d="M1534,1410 L1572,1412 L1572,1430 L1545,1430Z" fill="#d6a090"/>
</g>
</svg>

<div class="h" style="left:722px;top:451px"></div>
<div class="h" style="left:1434px;top:451px"></div>
<div class="h" style="left:722px;top:970px"></div>
<div class="h" style="left:722px;top:1490px"></div>
<div class="h" style="left:1434px;top:1490px"></div>
</body></html>
